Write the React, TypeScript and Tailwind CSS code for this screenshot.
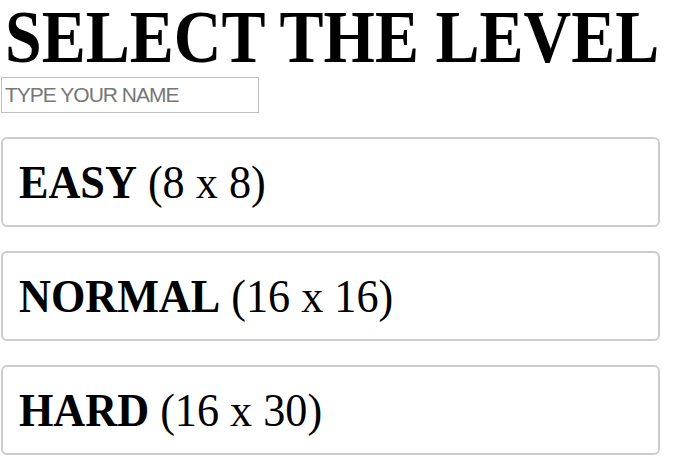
import * as React from "react"

const levels = [
  { name: "EASY", size: "(8 x 8)" },
  { name: "NORMAL", size: "(16 x 16)" },
  { name: "HARD", size: "(16 x 30)" },
]

export default function App() {
  const [name, setName] = React.useState("")

  return (
    <div className="min-h-[476px] w-[680px] bg-white font-['Liberation_Serif',serif] text-black">
      <h1 className="ml-[5px] block w-max origin-[center_46px] scale-y-[1.12] whitespace-nowrap text-[66px] font-bold leading-[76px]">
        SELECT THE LEVEL
      </h1>
      <input
        value={name}
        onChange={(e) => setName(e.target.value)}
        placeholder="TYPE YOUR NAME"
        className="ml-[1px] mt-[1px] block h-[36px] w-[258px] border border-[#c0c0c0] px-[3px] font-['Liberation_Sans',sans-serif] text-[21px] tracking-[-1px] text-black outline-none placeholder:text-[#777]"
      />
      <div className="ml-[1px] mt-[24px] flex w-[659px] flex-col gap-[24px]">
        {levels.map((l) => (
          <button
            key={l.name}
            className="flex h-[90px] items-center rounded-[6px] border-2 border-[#cccccc] bg-white px-[16px] text-left"
          >
            <span className="w-max origin-left scale-x-[0.94] whitespace-nowrap text-[47px] leading-[1.2]">
              <b>{l.name}</b> {l.size}
            </span>
          </button>
        ))}
      </div>
    </div>
  )
}
